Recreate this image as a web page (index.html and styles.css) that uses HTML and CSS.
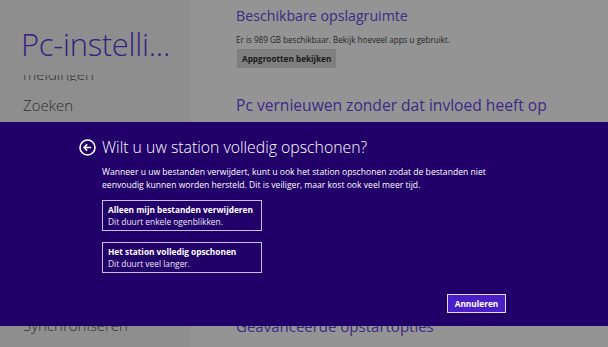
FILE: index.html
```html
<!DOCTYPE html>
<html lang="nl">
<head>
    <meta charset="UTF-8">
    <title>Pc-instellingen - Opschonen</title>
    <link rel="stylesheet" href="styles.css">
</head>
<body>

    <!-- Pagina achter de dialoog -->
    <div class="page">
        <div class="nav">
            <h1 class="nav-title">Pc-instelli...</h1>
            <ul class="nav-list">
                <li class="cut"><span>meldingen</span></li>
                <li>Zoeken</li>
            </ul>
            <div class="nav-bottom">Synchroniseren</div>
        </div>
        <div class="content">
            <section class="block">
                <h2>Beschikbare opslagruimte</h2>
                <p>Er is 989 GB beschikbaar. Bekijk hoeveel apps u gebruikt.</p>
                <span class="gray-btn">Appgrootten bekijken</span>
            </section>
            <section class="block big">
                <h2>Pc vernieuwen zonder dat invloed heeft op bestanden</h2>
            </section>
            <div class="content-bottom">Geavanceerde opstartopties</div>
        </div>
    </div>

    <!-- Dialoog -->
    <div class="dialog">
        <div class="dialog-head">
            <svg class="back" width="17" height="17" viewBox="0 0 17 17">
                <circle cx="8.5" cy="8.5" r="7.5" fill="none" stroke="#fff" stroke-width="1.6"/>
                <path d="M12.2 8.5H5.2M8.2 5.4L5.1 8.5l3.1 3.1" fill="none" stroke="#fff" stroke-width="1.6"/>
            </svg>
            <h3>Wilt u uw station volledig opschonen?</h3>
        </div>
        <div class="dialog-body">
            <p>Wanneer u uw bestanden verwijdert, kunt u ook het station opschonen zodat de bestanden niet<br>eenvoudig kunnen worden hersteld. Dit is veiliger, maar kost ook veel meer tijd.</p>
            <div class="choice">
                <strong>Alleen mijn bestanden verwijderen</strong>
                <span>Dit duurt enkele ogenblikken.</span>
            </div>
            <div class="choice">
                <strong>Het station volledig opschonen</strong>
                <span>Dit duurt veel langer.</span>
            </div>
            <div class="actions">
                <span class="cancel">Annuleren</span>
            </div>
        </div>
    </div>

</body>
</html>
```

FILE: styles.css
```css
/* Reset */
* {
    margin: 0;
    padding: 0;
    box-sizing: border-box;
}

html, body {
    width: 100%;
    height: 100%;
    overflow: hidden;
    font-family: 'Open Sans', 'Noto Sans', sans-serif;
    position: relative;
}

/* Pagina achter de dialoog */
.page {
    display: flex;
    height: 100%;
    background-color: #949494;
}

.nav {
    width: 191px;
    height: 100%;
    background-color: #8e8e8e;
    padding-left: 21px;
    position: relative;
}

.nav-title {
    font-weight: 300;
    font-size: 31px;
    line-height: 40px;
    color: #35237e;
    margin-top: 24px;
    letter-spacing: -0.3px;
    white-space: nowrap;
}

.nav-list {
    list-style: none;
    color: #2e2e2e;
    font-size: 15px;
    font-weight: 300;
}

.nav-list li {
    height: 30px;
    line-height: 30px;
    padding-left: 2px;
}

/* alleen de onderkant van het woord is zichtbaar */
.nav-list .cut {
    height: 6px;
    overflow: hidden;
    margin-top: 11px;
    margin-bottom: 9px;
}

.nav-list .cut span {
    display: block;
    line-height: 15px;
    margin-top: -8px;
}

.nav-bottom {
    position: absolute;
    left: 23px;
    top: 315px;
    font-size: 15px;
    font-weight: 300;
    color: #2e2e2e;
}

.content {
    flex: 1;
    padding-left: 45px;
    position: relative;
}

.block h2 {
    font-weight: 400;
    font-size: 14.2px;
    color: #3b2a86;
    margin-top: 6px;
    white-space: nowrap;
}

.block p {
    font-size: 8.1px;
    color: #262626;
    margin-top: 9px;
    white-space: nowrap;
}

.gray-btn {
    display: inline-block;
    margin-top: 2px;
    margin-left: 1px;
    background-color: #7f7f7f;
    color: #1a1a1a;
    font-size: 8.2px;
    font-weight: 700;
    padding: 4px 5px;
}

.block.big h2 {
    font-size: 15.6px;
    font-weight: 400;
    margin-top: 24px;
    line-height: 26px;
    width: 340px;
    white-space: normal;
}

.content-bottom {
    position: absolute;
    left: 45px;
    top: 316px;
    font-size: 15px;
    font-weight: 400;
    color: #3b2a86;
}

/* Dialoog */
.dialog {
    position: absolute;
    left: 0;
    top: 122px;
    width: 100%;
    height: 204px;
    background-color: #21006a;
    color: #ffffff;
    padding: 14px 102px 0 79px;
}

.dialog-head {
    display: flex;
    align-items: center;
    gap: 6px;
}

.dialog-head h3 {
    font-weight: 300;
    font-size: 15.8px;
    white-space: nowrap;
}

.dialog-body {
    padding-left: 23px;
}

.dialog-body p {
    font-size: 8.6px;
    line-height: 13px;
    margin-top: 8px;
    white-space: nowrap;
}

.choice {
    width: 160px;
    height: 31px;
    border: 1.5px solid #c9bdf0;
    margin-top: 8px;
    padding: 3px 5px;
    display: flex;
    flex-direction: column;
    line-height: 12px;
    white-space: nowrap;
}

.choice + .choice {
    margin-top: 11px;
}

.choice strong {
    font-size: 8.3px;
    font-weight: 700;
}

.choice span {
    font-size: 8.4px;
    color: #ece8f8;
}

.actions {
    display: flex;
    justify-content: flex-end;
    margin-top: 21px;
}

.cancel {
    width: 59px;
    height: 19px;
    border: 1.5px solid #e2dcf6;
    background-color: #4a1fc8;
    font-size: 8.3px;
    font-weight: 700;
    display: flex;
    align-items: center;
    justify-content: center;
}
```
